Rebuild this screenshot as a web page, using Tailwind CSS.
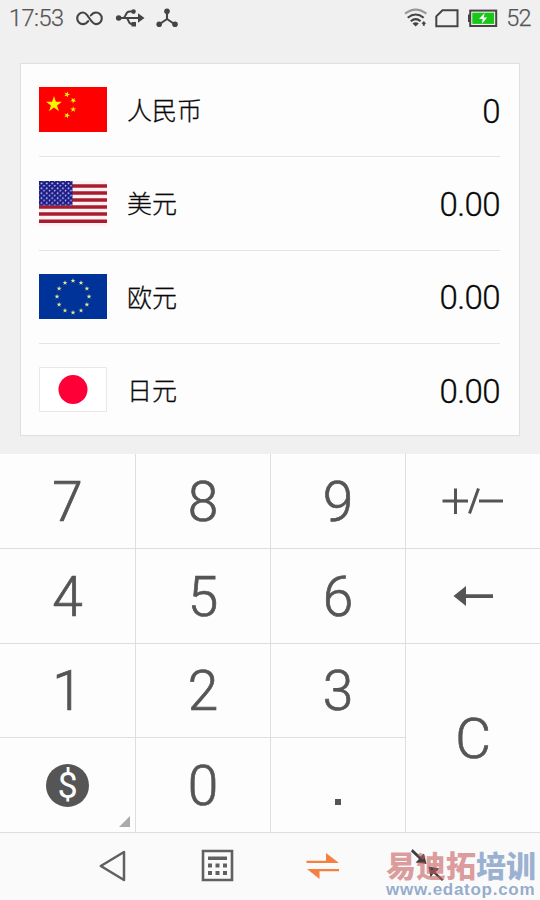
<!DOCTYPE html>
<html lang="zh-CN">
<head>
<meta charset="utf-8">
<title>汇率换算</title>
<script src="https://cdn.jsdelivr.net/npm/@tailwindcss/browser@4"></script>
</head>
<body class="relative w-[540px] h-[900px] overflow-hidden bg-[#f0f0f0] font-['Roboto','Noto_Sans_CJK_SC',sans-serif] flex flex-col">
<svg class="absolute w-0 h-0">
  <defs>
    <path id="star" d="M0-10 2.25-3.1 9.5-3.1 3.64 1.18 5.88 8.1 0 3.82-5.88 8.1-3.64 1.18-9.5-3.1-2.25-3.1Z"/>
    <pattern id="dots" width="5.4" height="4.9" patternUnits="userSpaceOnUse">
      <circle cx="2.4" cy="2.4" r=".85" fill="#dcdcfa"/><circle cx="5.1" cy="4.8" r=".85" fill="#dcdcfa"/><circle cx="5.1" cy="-.1" r=".85" fill="#dcdcfa"/><circle cx="-.3" cy="4.8" r=".85" fill="#dcdcfa"/>
    </pattern>
  </defs>
</svg>
<header class="h-[37px] shrink-0 flex items-center justify-between text-[#555] font-light text-[23.5px] leading-none pl-[9px] pr-[9px]">
  <div class="flex items-center">
    <span class="w-[67px] tracking-[-0.5px] mt-px [-webkit-text-stroke:0.25px_#555]">17:53</span>
    <svg class="w-[28px] h-[18px]" viewBox="0 0 28 18" fill="none" stroke="#444" stroke-width="2.1" stroke-linecap="round"><path d="M12.2 11.1C10.8 13 9.3 14.1 7 14.1A5.8 5.8 0 0 1 7 2.5C12.4 2.5 14.4 14.1 20 14.1A5.8 5.8 0 0 0 20 2.5C17.7 2.5 16.2 3.6 14.8 5.5"/></svg>
    <svg class="w-[30px] h-[22px] ml-[11px] mt-[-2px]" viewBox="0 0 30 22" fill="#444"><circle cx="3.7" cy="11" r="2.8"/><path d="M23 6.2 29.5 11 23 15.8Z"/><circle cx="18.5" cy="4.6" r="2.3"/><rect x="16.5" y="15" width="4.5" height="4.5"/><path d="M4 11H24M8 11C11 11 10 4.6 14.5 4.6H18M11 11C14 11 13 17 16.5 17H18" fill="none" stroke="#444" stroke-width="2"/></svg>
    <svg class="w-[24px] h-[22px] ml-[10px] mt-[-2px]" viewBox="0 0 24 22" fill="#444"><path d="M12 4V12L4 17.5M12 12 20 17.5" fill="none" stroke="#444" stroke-width="2.1"/><circle cx="12" cy="4.3" r="2.8"/><circle cx="4.2" cy="17.2" r="2.8"/><circle cx="20" cy="17.2" r="2.8"/></svg>
  </div>
  <div class="flex items-center">
    <svg class="w-[24px] h-[20px] mt-[-2px]" viewBox="0 0 24 20" fill="none" stroke="#444" stroke-width="2.1"><path d="M1 5.7Q11.7-2.4 22.4 5.7" stroke="#999"/><path d="M3.7 9.7Q11.7 3.3 19.7 9.7M6.8 13.2Q11.700 9.2 16.600 13.2"/><path d="M8.5 15.5Q11.7 13 14.8 15.5L11.7 18.600Z" fill="#444" stroke="none"/><path d="M19.8 13 22.3 15.8H20.8V17.8H18.8V15.8H17.3Z" fill="#444" stroke="none"/></svg>
    <svg class="w-[24px] h-[20px] ml-[7px] mt-[-2px]" viewBox="0 0 24 20" fill="none" stroke="#444" stroke-width="2"><path d="M7.5 2.3H22.5V18.2H1.3V8.3Z"/></svg>
    <svg class="w-[31px] h-[20px] ml-[8px] mt-[-2px]" viewBox="0 0 31 20"><path d="M3.5 6.5H1V14H3.5" fill="#444"/><rect x="3.2" y="2.6" width="26" height="15.4" fill="#f0f0f0" stroke="#444" stroke-width="2"/><rect x="5.3" y="4.7" width="21.8" height="11.2" fill="#18c718"/><path d="M17.7 5 12 11H15.7L14.8 15.8 20.2 9.5H16.6Z" fill="#fff"/></svg>
    <span class="ml-[8px] mt-px tracking-[-0.6px] [-webkit-text-stroke:0.25px_#555]">52</span>
  </div>
</header>
<main class="mt-[26px] ml-5 w-[500px] h-[373px] shrink-0 bg-[#fdfdfd] border border-[#dfdfdf] pl-[18px] pr-[19px] text-[#080808] flex flex-col">
  <section class="h-[93px] shrink-0 flex items-center border-b border-[#e4e4e4]">
    <svg class="w-[68px] h-[45px] mt-[-1px]" viewBox="0 0 68 45"><path d="M0 0H68V45H0Z" fill="#fe0000"/><g fill="#fff200"><use href="#star" transform="translate(15 17.4) scale(.84)"/><use href="#star" transform="translate(28 7.5) rotate(20) scale(.32)"/><use href="#star" transform="translate(34.2 13.4) rotate(40) scale(.32)"/><use href="#star" transform="translate(34.2 22.4) scale(.32)"/><use href="#star" transform="translate(28 28.4) rotate(20) scale(.32)"/></g></svg>
    <span class="ml-5 text-[25px] font-light leading-none mt-[3px] [-webkit-text-stroke:0.3px_#080808]">人民币</span><span class="ml-auto text-[33px] font-light leading-none tracking-[-0.6px] mt-[3px] [-webkit-text-stroke:0.3px_#080808]">0</span>
  </section>
  <section class="h-[93.500px] shrink-0 flex items-center border-b border-[#e4e4e4]">
    <svg class="w-[68px] h-[45px]" viewBox="0 0 68 45"><path d="M0 0H68V45H0Z" fill="#fff0f2"/><path d="M0 4.9H68M0 12H68M0 19H68M0 26H68M0 33.1H68M0 40.2H68" stroke="#a81c31" stroke-width="3.5"/><path d="M0 0H33.5V24.4H0Z" fill="#1c1c88"/><path d="M0 0H33.5V24.4H0Z" fill="url(#dots)"/></svg>
    <span class="ml-5 text-[25px] font-light leading-none mt-[3px] [-webkit-text-stroke:0.3px_#080808]">美元</span><span class="ml-auto text-[33px] font-light leading-none tracking-[-0.6px] mt-[3px] [-webkit-text-stroke:0.3px_#080808]">0.00</span>
  </section>
  <section class="h-[93.500px] shrink-0 flex items-center border-b border-[#e4e4e4]">
    <svg class="w-[68px] h-[45px] mt-[-1px]" viewBox="0 0 68 45"><path d="M0 0H68V45H0Z" fill="#003399"/><g fill="#e5e58c"><use href="#star" transform="translate(34 6.7) scale(.26)"/><use href="#star" transform="translate(42 8.8) scale(.26)"/><use href="#star" transform="translate(47.9 14.6) scale(.26)"/><use href="#star" transform="translate(50 22.6) scale(.26)"/><use href="#star" transform="translate(47.9 30.6) scale(.26)"/><use href="#star" transform="translate(42 36.5) scale(.26)"/><use href="#star" transform="translate(34 38.6) scale(.26)"/><use href="#star" transform="translate(26 36.5) scale(.26)"/><use href="#star" transform="translate(20.1 30.6) scale(.26)"/><use href="#star" transform="translate(18 22.6) scale(.26)"/><use href="#star" transform="translate(20.1 14.6) scale(.26)"/><use href="#star" transform="translate(26 8.8) scale(.26)"/></g></svg>
    <span class="ml-5 text-[25px] font-light leading-none mt-[3px] [-webkit-text-stroke:0.3px_#080808]">欧元</span><span class="ml-auto text-[33px] font-light leading-none tracking-[-0.6px] mt-[2px] [-webkit-text-stroke:0.3px_#080808]">0.00</span>
  </section>
  <section class="h-[91px] shrink-0 flex items-center">
    <svg class="w-[68px] h-[45px]" viewBox="0 0 68 45"><path d="M.5.5H67.5V44.500H.5Z" fill="#fff" stroke="#e8e8e8"/><circle cx="34" cy="22.6" r="14.5" fill="#fe0037"/></svg>
    <span class="ml-5 text-[25px] font-light leading-none mt-[3px] [-webkit-text-stroke:0.3px_#080808]">日元</span><span class="ml-auto text-[33px] font-light leading-none tracking-[-0.6px] mt-[3px] [-webkit-text-stroke:0.3px_#080808]">0.00</span>
  </section>
</main>
<div class="mt-[18px] h-[379px] shrink-0 grid grid-cols-4 grid-rows-4 bg-[#fdfdfd] text-[#555] text-[55px] font-light leading-none [&>div]:flex [&>div]:items-center [&>div]:justify-center [&>div]:border-[#dedede] [&>div]:border-b [&>div]:border-l [&_p]:mt-[3px] [&_p]:[-webkit-text-stroke:0.7px_#555]">
  <div class="-ml-px"><p>7</p></div><div><p>8</p></div><div><p>9</p></div>
  <div><svg class="w-[62px] h-[28px]" viewBox="0 0 62 28" fill="none" stroke="#555" stroke-width="3"><path d="M.5 14H26M13.5 1.5V27M27.5 26.5 36.5 1.5M37 14H61"/></svg></div>
  <div class="-ml-px"><p>4</p></div><div><p>5</p></div><div><p>6</p></div>
  <div><svg class="w-[40px] h-[22px]" viewBox="0 0 40 22" fill="#555"><path d="M.5 11 13 1V9.2H40V13H13V21Z"/></svg></div>
  <div class="-ml-px"><p>1</p></div><div><p>2</p></div><div><p>3</p></div>
  <div class="row-span-2"><p>C</p></div>
  <div class="-ml-px relative"><span class="w-[43px] h-[43px] rounded-full bg-[#555] text-[#fdfdfd] text-[36px] font-normal flex items-center justify-center pt-[2px]">$</span><svg class="absolute right-[5px] bottom-[5px] w-[11px] h-[11px]" viewBox="0 0 11 11"><path d="M11 0V11H0Z" fill="#aaa"/></svg></div>
  <div><p>0</p></div><div><span class="w-[6px] h-[6px] bg-[#555] mt-[33px]"></span></div>
</div>
<nav class="h-[67px] bg-[#fafafa] flex items-center pl-[99px] pb-[2px]">
  <svg class="w-[27px] h-[32px]" viewBox="0 0 27 32"><path d="M1.8 16 25 2V30Z" fill="none" stroke="#606060" stroke-width="2.5" stroke-linejoin="round"/></svg>
  <svg class="w-[33px] h-[33px] ml-[75px]" viewBox="0 0 33 33" fill="#606060"><path d="M2 2H31V31H2Z" fill="none" stroke="#606060" stroke-width="2.6"/><path d="M7 7.5H26V11H7ZM7 14.5H11V18.5H7ZM14.5 14.5H18.5V18.5H14.5ZM22 14.5H26V18.5H22ZM7 22H11V26H7ZM14.5 22H18.5V26H14.5ZM22 22H26V26H22Z"/></svg>
  <svg class="w-[34px] h-[28px] ml-[72px]" viewBox="0 0 34 28" fill="#f58042"><path d="M.5 8.7H20V1L33 11H.5ZM33 19.2H13.5V27L1 17H33Z"/></svg>
  <svg class="w-[33px] h-[33px] ml-[71px]" viewBox="0 0 33 33" fill="#404040"><path d="M1.5 0 9.5 7.5 13 4.5 15.5 15 4.5 13.5 8 10 0 2.5ZM17.5 17.5 28.5 19.5 24.5 23 32.5 30.5 31 32 22.5 24.5 19.5 28.5Z"/></svg>
</nav>
<div class="absolute left-[386px] top-[847px] w-[154px] whitespace-nowrap">
  <div class="text-[30px] leading-[34px] font-black font-['Noto_Sans_CJK_SC',sans-serif]"><span class="text-[#c65c60]/60">易迪拓</span><span class="text-[#5b80b5]/60">培训</span></div>
  <div class="text-[17px] leading-[18px] tracking-[0.72px] font-bold font-['Liberation_Sans',sans-serif] text-[#7492bd]/75">www.edatop.com</div>
</div>
</body>
</html>
